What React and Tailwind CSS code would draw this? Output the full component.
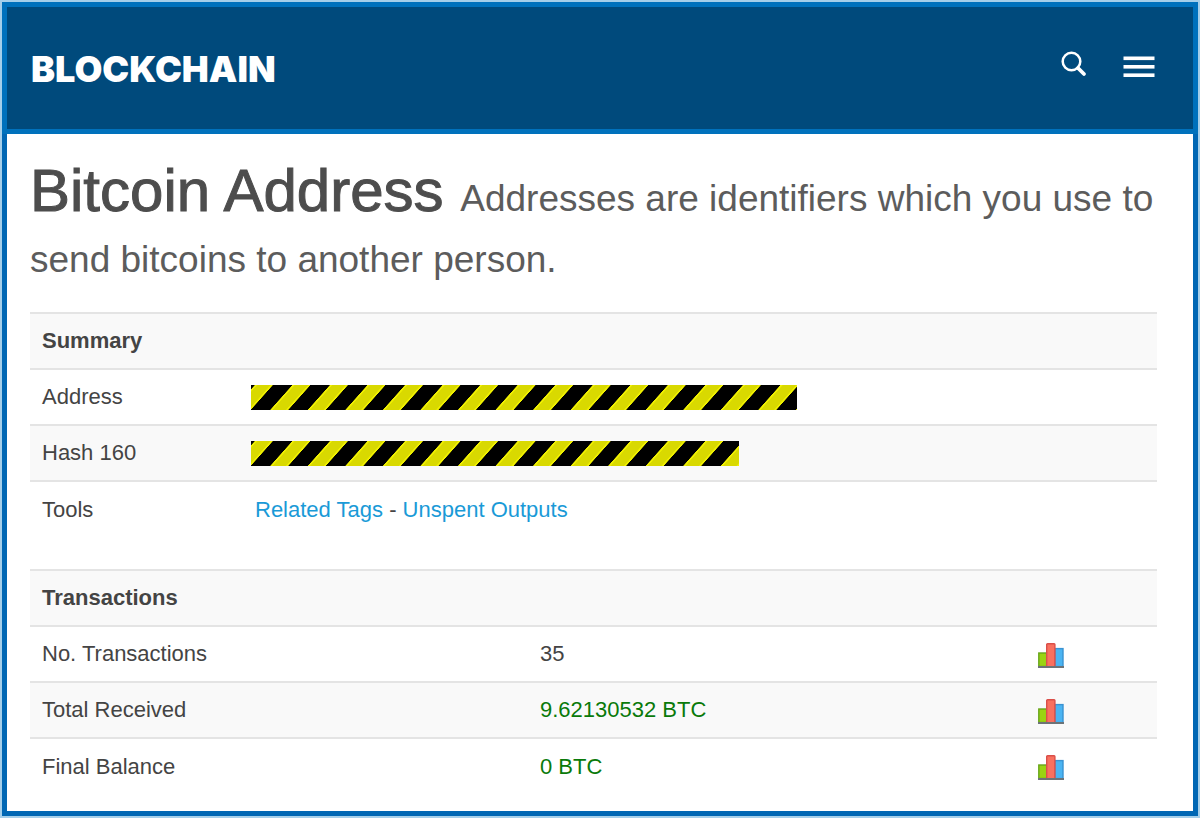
const transactions = [
  { label: 'No. Transactions', value: '35', plain: true },
  { label: 'Total Received', value: '9.62130532 BTC' },
  { label: 'Final Balance', value: '0 BTC' },
];

function SearchIcon() {
  return (
    <svg width="26" height="27" viewBox="0 0 26 27" fill="none" stroke="#fff" aria-hidden="true">
      <circle cx="10.5" cy="10.5" r="8.8" strokeWidth="2.5" />
      <path d="M17 17 L23 23" strokeWidth="3.8" strokeLinecap="round" />
    </svg>
  );
}

function MenuIcon() {
  return (
    <svg width="32" height="22" viewBox="0 0 32 22" fill="#fff" aria-hidden="true">
      <rect x="0.5" y="0.5" width="31" height="3.6" />
      <rect x="0.5" y="9" width="31" height="3.6" />
      <rect x="0.5" y="17.4" width="31" height="3.6" />
    </svg>
  );
}

function ChartIcon() {
  return (
    <svg width="26" height="25" viewBox="0 0 26 25" aria-hidden="true">
      <rect x="0.8" y="10" width="8" height="13.5" fill="#9bd312" stroke="#68a51a" strokeWidth="1.4" />
      <rect x="16.8" y="5.6" width="8.2" height="18" fill="#4bb4f2" stroke="#3a93d2" strokeWidth="1.4" />
      <rect x="8.7" y="0.8" width="8.2" height="22.8" rx="0.8" fill="#f9705f" stroke="#da4f49" strokeWidth="1.4" />
      <rect x="0" y="23" width="26" height="2" fill="#6d7377" />
    </svg>
  );
}

function RedactedBar({ id, className }) {
  return (
    <svg className={`-ml-1 h-[25px] max-w-full ${className}`} role="img" aria-label="Redacted">
      <defs>
        <linearGradient
          id={id}
          gradientUnits="userSpaceOnUse"
          spreadMethod="repeat"
          x1="22.3"
          y1="0"
          x2="43.2"
          y2="18.65"
        >
          <stop offset="0" stopColor="#000" />
          <stop offset="0.5" stopColor="#000" />
          <stop offset="0.52" stopColor="#f0f000" />
          <stop offset="0.56" stopColor="#f0f000" />
          <stop offset="0.58" stopColor="#d9d900" />
          <stop offset="0.92" stopColor="#d9d900" />
          <stop offset="0.94" stopColor="#f0f000" />
          <stop offset="0.98" stopColor="#f0f000" />
          <stop offset="1" stopColor="#000" />
        </linearGradient>
      </defs>
      <rect width="100%" height="100%" fill={`url(#${id})`} />
    </svg>
  );
}

export default function App() {
  return (
    <div className="min-h-screen bg-white font-['Liberation_Sans',Arial,sans-serif] text-[#444]">
      <div className="flex min-h-screen flex-col border-2 border-[#a5cfea]">
        <header className="flex h-[132px] items-center justify-between border-[5px] border-[#0071bc] bg-[#004a7c] pt-0.5 pr-[38px] pl-6">
          <a href="#" className="font-[Inter,sans-serif] text-[36px] leading-none font-black text-white">
            BLOCKCHAIN
          </a>
          <div className="flex items-end gap-9 pb-2.5">
            <button type="button" aria-label="Search">
              <SearchIcon />
            </button>
            <button type="button" aria-label="Menu">
              <MenuIcon />
            </button>
          </div>
        </header>

        <main className="flex-1 border-x-[5px] border-b-[5px] border-[#0067b4] pt-[26px] pr-9 pl-[23px]">
          <h1 className="mb-[30px] text-[60px] leading-[61px] text-[#4d4d4d]">
            <span className="[-webkit-text-stroke:1px_#4d4d4d]">Bitcoin Address</span>{' '}
            <small className="text-[37px] leading-none text-[#5c5c5c]">
              Addresses are identifiers which you use to send bitcoins to another person.
            </small>
          </h1>

          <table className="mb-8 w-full table-fixed text-left text-[22px] leading-7">
            <colgroup>
              <col className="w-[213px]" />
              <col />
            </colgroup>
            <thead>
              <tr className="h-14 border-t-2 border-[#e4e4e4] bg-[#f9f9f9]">
                <th colSpan="2" className="px-3">Summary</th>
              </tr>
            </thead>
            <tbody>
              <tr className="h-14 border-t-2 border-[#e4e4e4]">
                <td className="px-3">Address</td>
                <td className="px-3"><RedactedBar id="address" className="w-[546px]" /></td>
              </tr>
              <tr className="h-14 border-t-2 border-[#e4e4e4] bg-[#f9f9f9]">
                <td className="px-3">Hash 160</td>
                <td className="px-3"><RedactedBar id="hash" className="w-[488px]" /></td>
              </tr>
              <tr className="h-14 border-t-2 border-[#e4e4e4]">
                <td className="px-3">Tools</td>
                <td className="px-3">
                  <a href="#" className="text-[#1a9ad7]">Related Tags</a>
                  {' - '}
                  <a href="#" className="text-[#1a9ad7]">Unspent Outputs</a>
                </td>
              </tr>
            </tbody>
          </table>

          <table className="w-full table-fixed text-left text-[22px] leading-7">
            <colgroup>
              <col className="w-[498px]" />
              <col className="w-[498px]" />
              <col />
            </colgroup>
            <thead>
              <tr className="h-14 border-t-2 border-[#e4e4e4] bg-[#f9f9f9]">
                <th colSpan="3" className="px-3">Transactions</th>
              </tr>
            </thead>
            <tbody>
              {transactions.map((row) => (
                <tr key={row.label} className="h-14 border-t-2 border-[#e4e4e4] even:bg-[#f9f9f9]">
                  <td className="px-3">{row.label}</td>
                  <td className={`px-3 ${row.plain ? '' : 'text-[#0a7a0a]'}`}>{row.value}</td>
                  <td className="px-3">
                    <a href="#" aria-label={`${row.label} chart`} className="inline-block align-middle">
                      <ChartIcon />
                    </a>
                  </td>
                </tr>
              ))}
            </tbody>
          </table>
        </main>
      </div>
    </div>
  );
}
